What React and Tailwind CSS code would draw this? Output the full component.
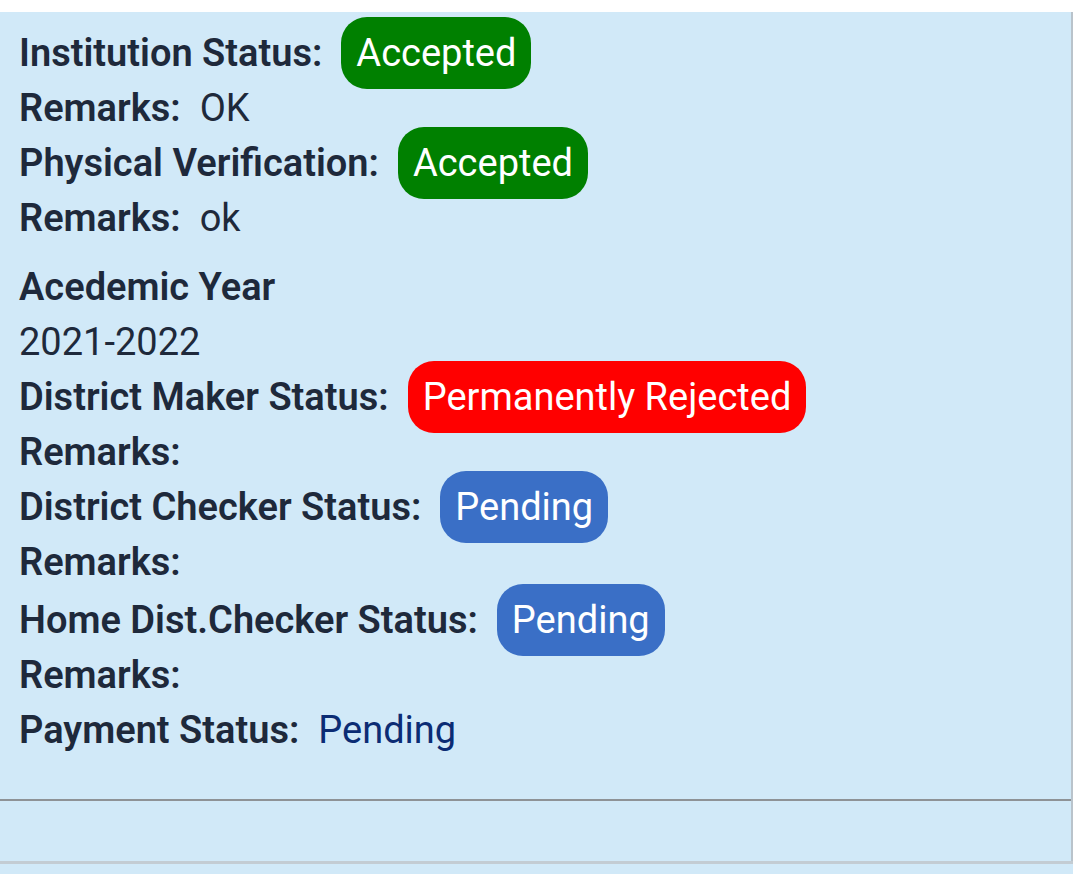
export default function App() {
  const label = "font-semibold text-[#1e293b]";
  const badge = "ml-[19px] rounded-[26px] px-[15px] py-[14px] text-white";
  return (
    <div className="min-h-[874px] w-[1073px] bg-[#d1e9f8]" style={{ fontFamily: "Roboto, 'Noto Sans', sans-serif" }}>
      <div className="h-[12px] bg-white"></div>
      <div className="border-r-2 border-[#b9c3cb]">
        <div className="pl-[19px] pt-[14px] pb-[41px] text-[38px] leading-[55px] text-[#1e293b]">
          <div>
            <span className={label}>Institution Status:</span>
            <span className={`${badge} bg-[#008000]`}>Accepted</span>
          </div>
          <div>
            <span className={label}>Remarks:</span>
            <span className="ml-[19px]">OK</span>
          </div>
          <div>
            <span className={label}>Physical Verification:</span>
            <span className={`${badge} bg-[#008000]`}>Accepted</span>
          </div>
          <div>
            <span className={label}>Remarks:</span>
            <span className="ml-[19px]">ok</span>
          </div>
          <div className="mt-[14px]">
            <span className={label}>Acedemic Year</span>
          </div>
          <div>2021-2022</div>
          <div>
            <span className={label}>District Maker Status:</span>
            <span className={`${badge} bg-[#ff0000]`}>Permanently Rejected</span>
          </div>
          <div>
            <span className={label}>Remarks:</span>
          </div>
          <div>
            <span className={label}>District Checker Status:</span>
            <span className={`${badge} bg-[#3a6fc6]`}>Pending</span>
          </div>
          <div>
            <span className={label}>Remarks:</span>
          </div>
          <div className="mt-[3px]">
            <span className={label}>Home Dist.Checker Status:</span>
            <span className={`${badge} bg-[#3a6fc6]`}>Pending</span>
          </div>
          <div>
            <span className={label}>Remarks:</span>
          </div>
          <div>
            <span className={label}>Payment Status:</span>
            <span className="ml-[19px] text-[#0b2c74]">Pending</span>
          </div>
        </div>
        <div className="h-[2px] bg-[#8e9296]"></div>
        <div className="h-[60px]"></div>
      </div>
      <div className="h-[3px] bg-[#c3ccd3]"></div>
      <div className="h-[12px]"></div>
    </div>
  );
}
